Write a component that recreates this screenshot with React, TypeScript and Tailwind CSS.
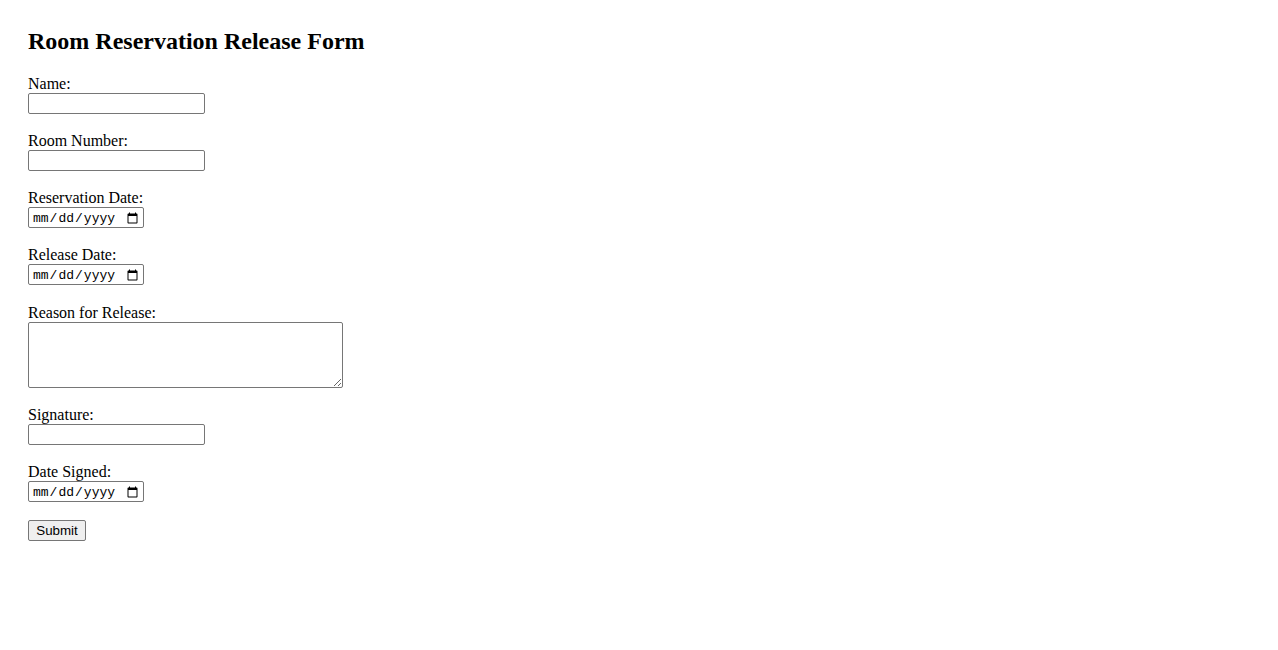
import React from 'react';

const serif = { fontFamily: '"Liberation Serif", "Times New Roman", serif' };

const textInput =
  'block w-[177px] h-[21px] border border-[#767676] rounded-[2px] bg-white px-[2px] py-px text-[13.33px] font-["Liberation_Sans",Arial,sans-serif] text-black outline-none';
const dateInput =
  'block w-[116px] h-[21px] border border-[#767676] rounded-[2px] bg-white pl-[3px] pr-[2px] pt-[2px] pb-0 text-[13px] leading-[18px] font-["Liberation_Mono","Courier_New",monospace] text-black outline-none';

function Field({ label, children, labelH = 'h-[19px] leading-[19px]', gap = 'mb-[17px]' }: { label: string; children: React.ReactNode; labelH?: string; gap?: string }) {
  return (
    <div className={`flex flex-col items-start ${gap}`}>
      <label className={`${labelH} text-[16px] text-black`}>{label}</label>
      {children}
    </div>
  );
}

export default function App() {
  return (
    <div className="min-h-screen bg-white pl-[28px] pt-[27px] text-black" style={serif}>
      <h2 className="h-[28px] leading-[28px] text-[24px] font-bold mb-[19px]">Room Reservation Release Form</h2>
      <form className="flex flex-col items-start" onSubmit={(e) => e.preventDefault()}>
        <Field label="Name:">
          <input type="text" className={textInput} />
        </Field>
        <Field label="Room Number:">
          <input type="text" className={textInput} />
        </Field>
        <Field label="Reservation Date:">
          <input type="date" className={dateInput} />
        </Field>
        <Field label="Release Date:" gap="mb-[18px]">
          <input type="date" className={dateInput} />
        </Field>
        <Field label="Reason for Release:">
          <textarea className="block w-[315px] h-[66px] resize border border-[#767676] rounded-[2px] bg-white p-[2px] text-[13px] font-['Liberation_Mono',monospace] outline-none" />
        </Field>
        <Field label="Signature:">
          <input type="text" className={textInput} />
        </Field>
        <Field label="Date Signed:" gap="mb-[18px]">
          <input type="date" className={dateInput} />
        </Field>
        <button
          type="submit"
          className="h-[21px] w-[58px] border border-[#767676] rounded-[2px] bg-[#efefef] px-[6px] py-0 text-[13.33px] leading-[19px] text-black font-['Liberation_Sans',Arial,sans-serif]"
        >
          Submit
        </button>
      </form>
    </div>
  );
}
